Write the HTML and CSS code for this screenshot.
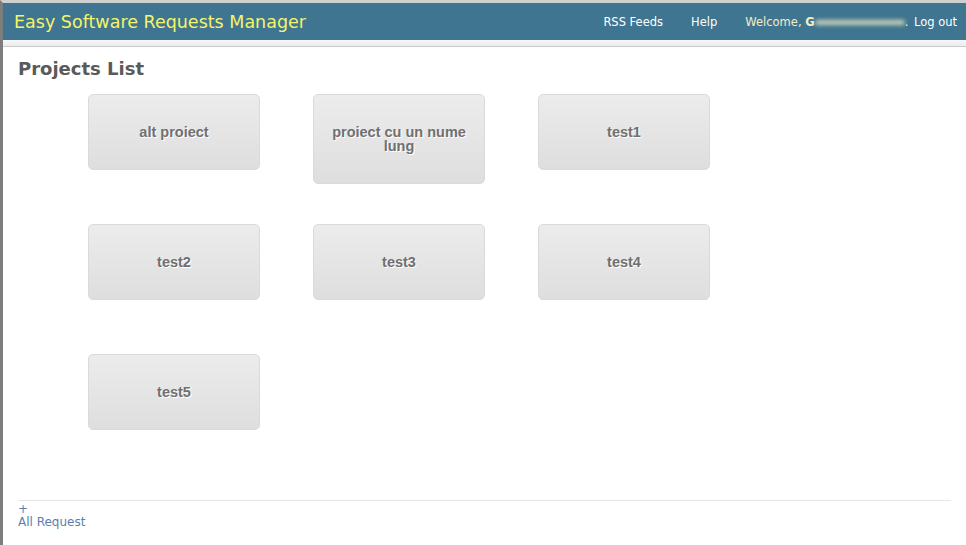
FILE: index.html
```html
<!DOCTYPE html>
<html lang="en">
<head>
  <meta charset="UTF-8">
  <title>Easy Software Requests Manager</title>
  <link rel="stylesheet" href="styles.css">
</head>
<body>
<div class="page">
  <div class="header">
    <div class="brand">Easy Software Requests Manager</div>
    <div class="nav">
      <a href="#">RSS Feeds</a>
      <a href="#">Help</a>
      <span class="welcome">Welcome, <b>G</b><span class="blurred"></span>. <a href="#">Log out</a></span>
    </div>
  </div>
  <div class="subbar"></div>

  <div class="content">
    <h1>Projects List</h1>
    <div class="projects">
      <a class="project" href="#">alt proiect</a>
      <a class="project tall" href="#">proiect cu un nume lung</a>
      <a class="project" href="#">test1</a>
      <a class="project" href="#">test2</a>
      <a class="project" href="#">test3</a>
      <a class="project" href="#">test4</a>
      <a class="project" href="#">test5</a>
    </div>

    <div class="footer">
      <a href="#">+</a><br>
      <a href="#">All Request</a>
    </div>
  </div>
</div>
</body>
</html>
```

FILE: styles.css
```css
html, body {
  margin: 0;
  height: 100%;
}

body {
  font-family: 'DejaVu Sans', sans-serif;
  background: #fff;
}

.page {
  min-height: 100%;
  box-sizing: border-box;
  border-left: 3px solid #7d7d7d;
  border-top: 3px solid #cfcfcf;
}

.header {
  height: 37px;
  background: #3f7590;
  display: flex;
  align-items: center;
  justify-content: space-between;
  padding: 0 9px 0 11px;
}

.brand {
  color: #f4f46a;
  font-size: 17.5px;
  padding-top: 1px;
}

.nav {
  display: flex;
  gap: 28px;
  font-size: 11.5px;
  color: #fff;
}

.nav a {
  color: #fff;
  text-decoration: none;
}

.welcome {
  color: #f1efc6;
}

.welcome b {
  color: #f1efc6;
}

.blurred {
  display: inline-block;
  background: #c8d2b8;
  filter: blur(2px);
  height: 5px;
  width: 90px;
  vertical-align: middle;
  border-radius: 3px;
}

.welcome a {
  margin-left: 2px;
}

.subbar {
  height: 6px;
  background: linear-gradient(#f7f7f7, #ececec);
  border-bottom: 1px solid #cbcbcb;
}

.content {
  padding: 0 15px 0 15px;
}

h1 {
  margin: 11px 0 14px;
  font-size: 18px;
  color: #5a5a5a;
  line-height: 22px;
}

.projects {
  display: grid;
  grid-template-columns: repeat(3, 172px);
  grid-auto-rows: 130px;
  column-gap: 53px;
  align-items: start;
  padding-left: 70px;
  margin-bottom: 16px;
}

.project {
  box-sizing: border-box;
  height: 76px;
  display: flex;
  align-items: center;
  justify-content: center;
  text-align: center;
  padding: 0 10px;
  border: 1px solid #dadada;
  border-radius: 5px;
  background: linear-gradient(#ececec, #dedede);
  color: #707070;
  font-family: 'Liberation Sans', Arial, sans-serif;
  font-weight: bold;
  font-size: 14.5px;
  line-height: 14px;
  text-decoration: none;
  text-shadow: 1px 1px 0 #fff;
}

.project.tall {
  height: 90px;
}

.footer {
  border-top: 1px solid #e6e6e6;
  font-size: 12px;
  line-height: 13px;
  padding-top: 2px;
}

.footer a {
  color: #5a7fb0;
  text-decoration: none;
}
```
